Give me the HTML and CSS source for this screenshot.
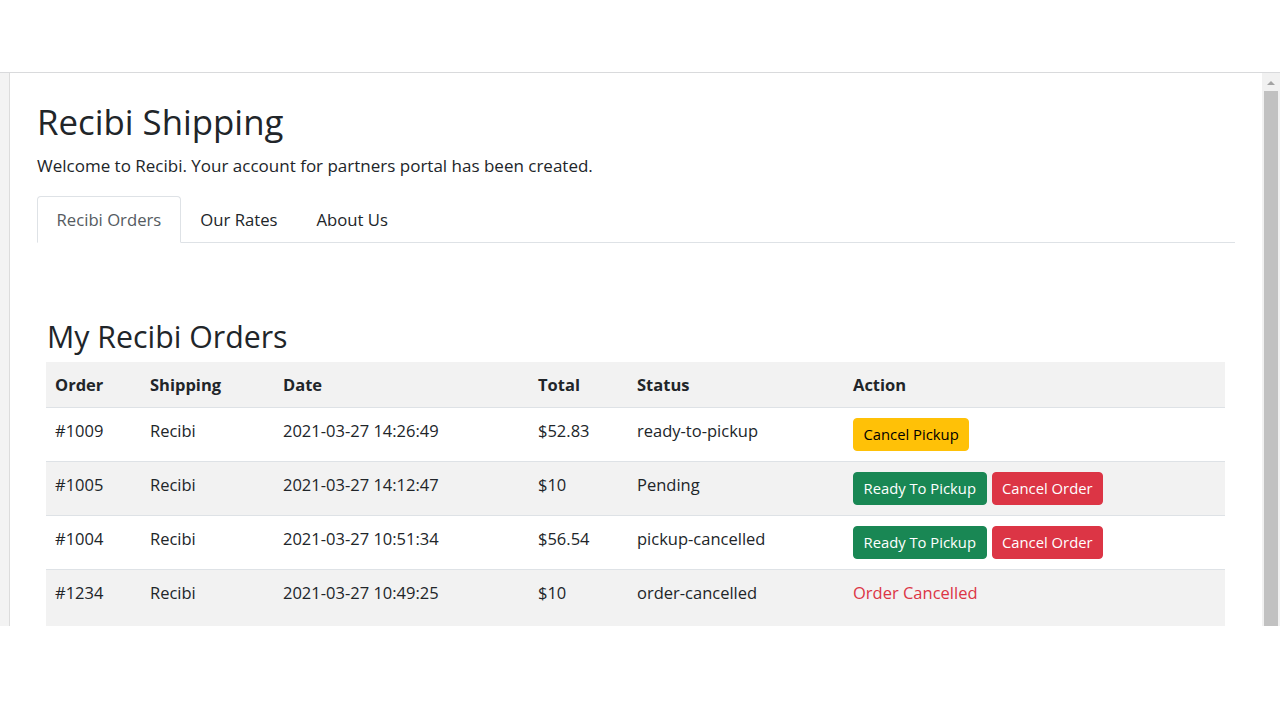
FILE: index.html
```html
<!DOCTYPE html>
<html>
<head>
<meta charset="utf-8">
<title>Recibi Shipping</title>
<link rel="stylesheet" href="styles.css">
</head>
<body>
<div class="stage">
  <div class="window">
    <div class="side"></div>
    <main class="page">
      <h1 class="title">Recibi Shipping</h1>
      <p class="intro">Welcome to Recibi. Your account for partners portal has been created.</p>
      <nav class="tabs">
        <a class="tab active">Recibi Orders</a>
        <a class="tab">Our Rates</a>
        <a class="tab">About Us</a>
      </nav>
      <section class="panel">
        <h2 class="subtitle">My Recibi Orders</h2>
        <table class="orders">
          <colgroup>
            <col class="c-order"><col class="c-ship"><col class="c-date"><col class="c-total"><col class="c-status"><col class="c-action">
          </colgroup>
          <thead>
            <tr><th>Order</th><th>Shipping</th><th>Date</th><th>Total</th><th>Status</th><th>Action</th></tr>
          </thead>
          <tbody>
            <tr>
              <td>#1009</td><td>Recibi</td><td>2021-03-27 14:26:49</td><td>$52.83</td><td>ready-to-pickup</td>
              <td><div class="actions"><button class="btn warn">Cancel Pickup</button></div></td>
            </tr>
            <tr class="odd">
              <td>#1005</td><td>Recibi</td><td>2021-03-27 14:12:47</td><td>$10</td><td>Pending</td>
              <td><div class="actions"><button class="btn ok">Ready To Pickup</button><button class="btn danger">Cancel Order</button></div></td>
            </tr>
            <tr>
              <td>#1004</td><td>Recibi</td><td>2021-03-27 10:51:34</td><td>$56.54</td><td>pickup-cancelled</td>
              <td><div class="actions"><button class="btn ok">Ready To Pickup</button><button class="btn danger">Cancel Order</button></div></td>
            </tr>
            <tr class="odd last">
              <td>#1234</td><td>Recibi</td><td>2021-03-27 10:49:25</td><td>$10</td><td>order-cancelled</td>
              <td><span class="cancelled">Order Cancelled</span></td>
            </tr>
          </tbody>
        </table>
      </section>
    </main>
    <div class="scrollbar">
      <div class="arrow"></div>
      <div class="thumb"></div>
    </div>
  </div>
</div>
</body>
</html>
```

FILE: styles.css
```css
html, body {
  margin: 0;
  padding: 0;
  background: #ffffff;
}
body {
  font-family: "Open Sans", "Noto Sans", sans-serif;
  color: #212529;
  height: 720px;
  overflow: hidden;
}
.stage {
  padding-top: 72px;
}
.window {
  display: flex;
  height: 554px;
  overflow: hidden;
  border-top: 1px solid #d9dadc;
  box-sizing: border-box;
}
.side {
  width: 9px;
  flex: none;
  background: #f3f3f3;
  border-right: 1px solid #dcdcdc;
}
.page {
  flex: 1;
  min-width: 0;
  padding: 0 27px 0 27px;
  overflow: hidden;
}
.title {
  font-size: 34.8px;
  font-weight: 500;
  line-height: 1.2;
  margin: 28px 0 10px;
}
.intro {
  font-size: 17px;
  line-height: 25px;
  margin: 0 0 18px;
}
.tabs {
  display: flex;
  border-bottom: 1px solid #dee2e6;
}
.tab {
  font-size: 16.7px;
  line-height: 25px;
  padding: 10px 18.5px 10px;
  border: 1px solid transparent;
  border-top-left-radius: 4px;
  border-top-right-radius: 4px;
  margin-bottom: -1px;
  color: #212529;
}
.tab.active {
  color: #555b61;
  border-color: #dee2e6 #dee2e6 #ffffff;
  background: #fff;
}
.panel {
  padding: 0 10px 0 9px;
}
.subtitle {
  font-size: 30.3px;
  font-weight: 500;
  line-height: 1.2;
  margin: 76px 0 7px 1px;
}
.orders {
  width: 100%;
  border-collapse: collapse;
  table-layout: fixed;
  font-size: 16.5px;
  line-height: 25px;
}
.c-order { width: 95px; }
.c-ship { width: 133px; }
.c-date { width: 255px; }
.c-total { width: 99px; }
.c-status { width: 216px; }
.orders th, .orders td {
  text-align: left;
  vertical-align: top;
  padding: 10px 9px;
  border-bottom: 1px solid #dee2e6;
  white-space: nowrap;
}
.orders th {
  font-weight: 700;
  background: #f2f2f2;
}
.orders tr.odd td {
  background: #f2f2f2;
}
.orders tr.last td {
  height: 40px;
  border-bottom: none;
}
.actions {
  display: flex;
  gap: 5px;
}
.btn {
  font-family: inherit;
  font-size: 14.8px;
  line-height: 21px;
  padding: 5px 9.5px;
  border: 1px solid transparent;
  border-radius: 4px;
  cursor: pointer;
}
.btn.warn { background: #ffc107; border-color: #ffc107; color: #000; }
.btn.ok { background: #198754; border-color: #198754; color: #fff; }
.btn.danger { background: #dc3545; border-color: #dc3545; color: #fff; }
.cancelled {
  color: #dc3545;
}
.scrollbar {
  width: 18px;
  flex: none;
  background: #f1f1f1;
  display: flex;
  flex-direction: column;
  align-items: center;
}
.arrow {
  margin-top: 8px;
  width: 0;
  height: 0;
  border-left: 4px solid transparent;
  border-right: 4px solid transparent;
  border-bottom: 4px solid #a3a3a3;
}
.thumb {
  margin-top: 6px;
  width: 14px;
  flex: 1;
  background: #c1c1c1;
}
```
